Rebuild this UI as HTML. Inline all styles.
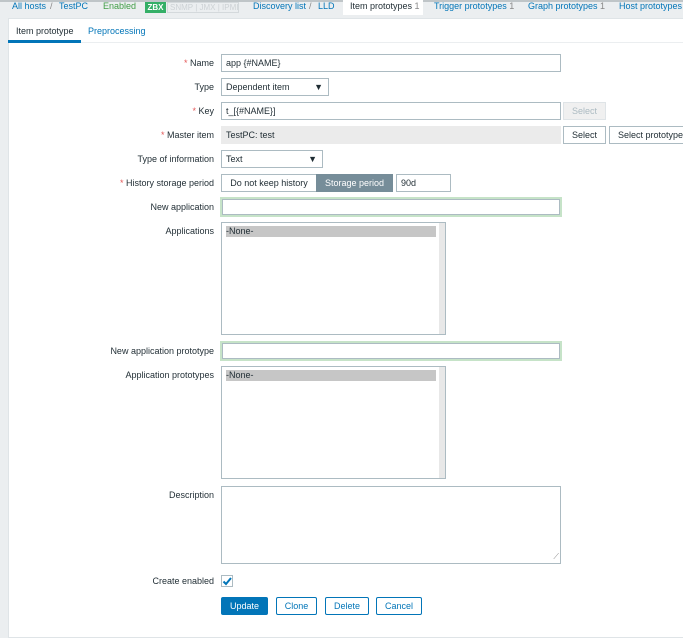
<!DOCTYPE html>
<html><head><meta charset="utf-8"><style>
*{box-sizing:border-box;margin:0;padding:0}
body{width:683px;height:625px;overflow:hidden;background:#ebeef0;font-family:"Liberation Sans",Arial,sans-serif;font-size:9px;color:#1f2c33;position:relative}
.a{position:absolute}
.t{position:absolute;white-space:nowrap}
.lbl{position:absolute;right:469px;white-space:nowrap;line-height:19px}
.in{position:absolute;border:1px solid #acbbc2;background:#fff;line-height:16px;padding-left:4px;white-space:nowrap}
.btn{position:absolute;border:1px solid #0275b8;color:#0275b8;background:#fff;text-align:center;line-height:16px;border-radius:2px}
.req{color:#e45959}
.blue{color:#0275b8}
</style></head><body>
<div class="a" style="left:0;top:0;width:683px;height:2px;background:#bfc5c8"></div>
<div class="t blue" style="left:12px;top:1px">All hosts</div>
<div class="t" style="left:50px;top:1px;color:#888">/</div>
<div class="t blue" style="left:59px;top:1px">TestPC</div>
<div class="t" style="left:103px;top:1px;color:#429e47">Enabled</div>
<div class="a" style="left:145px;top:2px;width:21px;height:11px;background:#34af67;color:#fff;font-weight:bold;text-align:center;line-height:11px;font-size:8px">ZBX</div>
<div class="a" style="left:167px;top:2px;width:72px;height:11px;border:1px solid #d4d9dc;color:#cdd2d5;line-height:9px;font-size:8px;padding-left:2px;white-space:nowrap;overflow:hidden">SNMP | JMX | IPMI</div>
<div class="t blue" style="left:253px;top:1px">Discovery list</div>
<div class="t" style="left:309px;top:1px;color:#888">/</div>
<div class="t blue" style="left:318px;top:1px">LLD</div>
<div class="a" style="left:343px;top:0;width:80px;height:15px;background:#fff"></div>
<div class="t" style="left:350px;top:1px">Item prototypes <span style="color:#888">1</span></div>
<div class="t blue" style="left:434px;top:1px">Trigger prototypes <span style="color:#888">1</span></div>
<div class="t blue" style="left:528px;top:1px">Graph prototypes <span style="color:#888">1</span></div>
<div class="t blue" style="left:619px;top:1px">Host prototypes</div>

<div class="a" style="left:8px;top:18px;width:680px;height:620px;background:#fff;border:1px solid #dfe4e7"></div>
<div class="a" style="left:8px;top:42px;width:675px;height:1px;background:#ebeef0"></div>
<div class="a" style="left:8px;top:40px;width:73px;height:3px;background:#0275b8"></div>
<div class="t" style="left:16px;top:26px">Item prototype</div>
<div class="t blue" style="left:88px;top:26px">Preprocessing</div>

<div class="lbl" style="top:54px"><span class="req">*</span> Name</div>
<div class="in" style="left:221px;top:54px;width:340px;height:18px">app {#NAME}</div>
<div class="lbl" style="top:78px">Type</div>
<div class="in" style="left:221px;top:78px;width:108px;height:18px">Dependent item<span class="a" style="right:5px;top:0">▼</span></div>
<div class="lbl" style="top:102px"><span class="req">*</span> Key</div>
<div class="in" style="left:221px;top:102px;width:340px;height:18px">t_[{#NAME}]</div>
<div class="a" style="left:563px;top:102px;width:43px;height:18px;border:1px solid #dfe4e7;background:#f0f0f0;color:#acbbc2;text-align:center;line-height:16px">Select</div>
<div class="lbl" style="top:126px"><span class="req">*</span> Master item</div>
<div class="in" style="left:221px;top:126px;width:340px;height:18px;background:#ebebeb;border-color:#ebebeb">TestPC: test</div>
<div class="a" style="left:563px;top:126px;width:43px;height:18px;border:1px solid #acbbc2;text-align:center;line-height:16px">Select</div>
<div class="a" style="left:609px;top:126px;width:80px;height:18px;border:1px solid #acbbc2;line-height:16px;padding-left:8px;white-space:nowrap">Select prototype</div>
<div class="lbl" style="top:150px">Type of information</div>
<div class="in" style="left:221px;top:150px;width:102px;height:18px">Text<span class="a" style="right:5px;top:0">▼</span></div>
<div class="lbl" style="top:174px"><span class="req">*</span> History storage period</div>
<div class="a" style="left:221px;top:174px;width:96px;height:18px;border:1px solid #acbbc2;text-align:center;line-height:16px">Do not keep history</div>
<div class="a" style="left:316px;top:174px;width:77px;height:18px;background:#768d99;color:#fff;text-align:center;line-height:18px">Storage period</div>
<div class="in" style="left:396px;top:174px;width:55px;height:18px">90d</div>
<div class="lbl" style="top:198px">New application</div>
<div class="in" style="left:220px;top:197px;width:342px;height:20px;border:2px solid #c6e3c8"><div class="a" style="left:0;top:0;right:0;bottom:0;border:1px solid #acbbc2"></div></div>
<div class="lbl" style="top:222px">Applications</div>
<div class="in" style="left:221px;top:222px;width:225px;height:113px;padding:0">
<div class="a" style="left:4px;top:3px;width:210px;height:11px;background:#c6c6c6;line-height:11px">-None-</div>
<div class="a" style="right:0;top:0;width:6px;height:111px;background:#e8e8e8"></div></div>
<div class="lbl" style="top:342px">New application prototype</div>
<div class="in" style="left:220px;top:341px;width:342px;height:20px;border:2px solid #c6e3c8"><div class="a" style="left:0;top:0;right:0;bottom:0;border:1px solid #acbbc2"></div></div>
<div class="lbl" style="top:366px">Application prototypes</div>
<div class="in" style="left:221px;top:366px;width:225px;height:113px;padding:0">
<div class="a" style="left:4px;top:3px;width:210px;height:11px;background:#c6c6c6;line-height:11px">-None-</div>
<div class="a" style="right:0;top:0;width:6px;height:111px;background:#e8e8e8"></div></div>
<div class="lbl" style="top:486px">Description</div>
<div class="in" style="left:221px;top:486px;width:340px;height:78px"><span class="a" style="right:1px;bottom:-2px;color:#888;font-size:8px">⟋</span></div>
<div class="lbl" style="top:572px">Create enabled</div>
<div class="a" style="left:221px;top:575px;width:12px;height:12px;border:1px solid #acbbc2"><svg width="10" height="10" style="position:absolute;left:0;top:0"><path d="M1.5 5.5L4 8L9 2" fill="none" stroke="#0275b8" stroke-width="2"/></svg></div>
<div class="a" style="left:221px;top:597px;width:47px;height:18px;background:#0275b8;color:#fff;text-align:center;line-height:18px;border-radius:2px">Update</div>
<div class="btn" style="left:276px;top:597px;width:41px;height:18px">Clone</div>
<div class="btn" style="left:325px;top:597px;width:44px;height:18px">Delete</div>
<div class="btn" style="left:376px;top:597px;width:46px;height:18px">Cancel</div>
</body></html>
